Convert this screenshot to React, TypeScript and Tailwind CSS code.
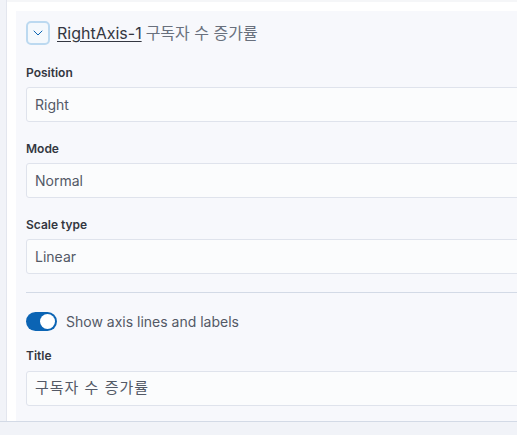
import { ChevronDown } from "lucide-react";

const font = { fontFamily: "Inter, 'Noto Sans CJK KR', sans-serif" };

const Field = ({ label, value, className = "" }: { label: string; value: string; className?: string }) => (
  <div className={className}>
    <div className="text-[12px] leading-4 font-semibold text-[#343741] mb-[6px]">{label}</div>
    <div className="h-[35px] w-[560px] flex items-center px-[8px] bg-[#fbfcfd] border border-[#dfe3ec] rounded-[3px] text-[14px] text-[#535966]">
      {value}
    </div>
  </div>
);

export default function App() {
  return (
    <div className="w-[517px] h-[435px] overflow-hidden flex flex-col bg-[#f1f3f8]" style={font}>
      <div className="flex flex-1 min-h-0">
        <div className="w-[7px] bg-[#f1f3f8] border-r border-[#e3e6ee]" />
        <div className="flex-1 bg-white pl-[9px] pt-[2px] border-t-2 border-[#f5f6f8] overflow-hidden">
          <div className="h-[7px]" />
          <div className="bg-[#f7f8fc] w-[600px] h-full pt-[10px] pl-[10px]">
            <div className="flex items-center h-[24px]">
              <button className="w-[24px] h-[24px] flex items-center justify-center rounded-[5px] border-2 border-[#bcd9f0] bg-[#f4f8fc]">
                <ChevronDown className="w-[16px] h-[16px] text-[#0b64b4]" strokeWidth={1.5} />
              </button>
              <span className="ml-[7px] text-[16px] text-[#343741] underline underline-offset-2">RightAxis-1</span>
              <span className="ml-[4px] text-[16px] text-[#69707d]">구독자 수 증가률</span>
            </div>
            <Field label="Position" value="Right" className="mt-[20px]" />
            <Field label="Mode" value="Normal" className="mt-[19px]" />
            <Field label="Scale type" value="Linear" className="mt-[19px]" />
            <div className="mt-[18px] h-px bg-[#d3dae6] w-[560px]" />
            <div className="mt-[19px] flex items-center h-[19px]">
              <div className="w-[31px] h-[19px] rounded-full bg-[#0b64b4] flex items-center justify-end pr-[2px]">
                <div className="w-[15px] h-[15px] rounded-full bg-white" />
              </div>
              <span className="ml-[9px] text-[14px] text-[#535966]">Show axis lines and labels</span>
            </div>
            <div className="mt-[17px]">
              <div className="text-[12px] leading-4 font-semibold text-[#343741] mb-[7px]">Title</div>
              <div className="h-[35px] w-[560px] flex items-center px-[8px] bg-[#fbfcfd] border border-[#dfe3ec] rounded-[3px] text-[15px] tracking-[1px] text-[#535966]">
                구독자 수 증가률
              </div>
            </div>
          </div>
        </div>
      </div>
      <div className="h-[14px] shrink-0 bg-[#f1f3f8] border-t border-[#d3dae6]" />
    </div>
  );
}
